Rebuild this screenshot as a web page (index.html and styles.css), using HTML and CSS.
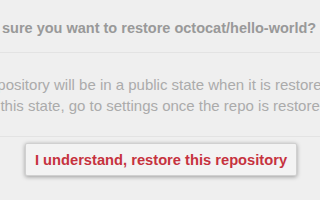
FILE: index.html
```html
<!DOCTYPE html>
<html>
<head>
<meta charset="utf-8">
<link rel="stylesheet" href="styles.css">
</head>
<body>
<div class="dialog">
  <div class="header">
    <h2 class="title">Are you sure you want to restore octocat/hello-world?</h2>
  </div>
  <div class="body">
    <p class="line line-one">The repository will be in a public state when it is restored.</p>
    <p class="line line-two">To change this state, go to settings once the repo is restored.</p>
  </div>
  <div class="footer">
    <button class="btn-danger">I understand, restore this repository</button>
  </div>
</div>
</body>
</html>
```
FILE: styles.css
```css
html, body {
  margin: 0;
  padding: 0;
  background: #efefef;
  width: 320px;
  height: 200px;
  overflow: hidden;
}
.dialog {
  font-family: "Liberation Sans", Arial, sans-serif;
  display: flex;
  flex-direction: column;
}
.header {
  height: 53px;
  border-bottom: 1px solid #e3e3e3;
  display: flex;
  align-items: center;
  padding-top: 4px;
  box-sizing: border-box;
  overflow: hidden;
}
.title {
  margin: 0 0 0 -56px;
  font-size: 14.5px;
  font-weight: bold;
  color: #999999;
  white-space: nowrap;
}
.body {
  padding: 21px 0 0;
  height: 62px;
  overflow: hidden;
}
.line {
  margin: 0;
  font-size: 15px;
  line-height: 21px;
  color: #ababab;
  white-space: nowrap;
}
.line-one { margin-left: -46px; }
.line-two { margin-left: -73px; }
.footer {
  border-top: 1px solid #e3e3e3;
  padding: 6px 23px 0 25px;
  height: 60px;
}
.btn-danger {
  display: block;
  width: 100%;
  height: 33px;
  background: #f3f3f3;
  border: 1px solid #d0d0d0;
  border-radius: 2px;
  box-shadow: 0 1px 4px rgba(0,0,0,0.35);
  font-family: "Liberation Sans", Arial, sans-serif;
  font-size: 14.7px;
  font-weight: bold;
  color: #c6323e;
  text-align: center;
  padding: 0;
}
```
